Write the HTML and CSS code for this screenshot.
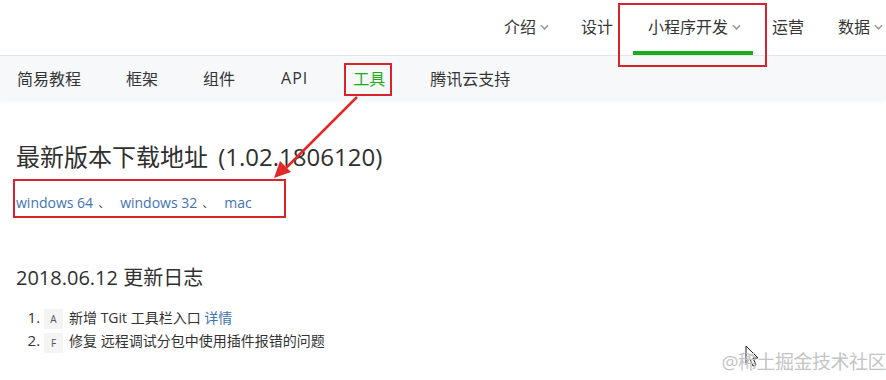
FILE: index.html
```html
<!DOCTYPE html>
<html lang="zh-CN">
<head>
<meta charset="utf-8">
<title>小程序开发 - 工具</title>
<link rel="stylesheet" href="styles.css">
</head>
<body>
<header class="topnav">
  <nav class="topnav-list">
    <a class="topnav-item">介绍<svg class="chev" viewBox="0 0 10 6"><polyline points="1,1 5,5 9,1"/></svg></a>
    <a class="topnav-item">设计</a>
    <a class="topnav-item active">小程序开发<svg class="chev" viewBox="0 0 10 6"><polyline points="1,1 5,5 9,1"/></svg><span class="underline"></span></a>
    <a class="topnav-item wide">运营</a>
    <a class="topnav-item">数据<svg class="chev" viewBox="0 0 10 6"><polyline points="1,1 5,5 9,1"/></svg></a>
  </nav>
</header>
<div class="subnav">
  <a class="subnav-item">简易教程</a>
  <a class="subnav-item">框架</a>
  <a class="subnav-item">组件</a>
  <a class="subnav-item latin">API</a>
  <a class="subnav-item current">工具</a>
  <a class="subnav-item">腾讯云支持</a>
</div>
<main class="content">
  <h1 class="title">最新版本下载地址 (1.02.1806120)</h1>
  <p class="downloads"><a class="link">windows 64</a><span class="sep">、</span><a class="link">windows 32</a><span class="sep">、</span><a class="link">mac</a></p>
  <h2 class="subtitle">2018.06.12 更新日志</h2>
  <ol class="log">
    <li><span class="badge">A</span>新增 TGit 工具栏入口 <a class="link">详情</a></li>
    <li><span class="badge">F</span>修复 远程调试分包中使用插件报错的问题</li>
  </ol>
</main>
<svg class="annotations" viewBox="0 0 886 380" width="886" height="380">
  <rect x="619" y="4" width="147" height="62" fill="none" stroke="#d9232c" stroke-width="2"/>
  <rect x="345" y="64" width="46" height="31" fill="none" stroke="#d9232c" stroke-width="2"/>
  <rect x="14" y="180" width="271" height="37" fill="none" stroke="#d9232c" stroke-width="2"/>
  <line x1="357" y1="97" x2="284" y2="170" stroke="#e02a2a" stroke-width="2.5"/>
  <polygon points="274,178 280,161 291,172" fill="#e02a2a"/>
  <path class="cursor" d="M746,346 L746,363 L750,359 L753,366 L756,365 L753,358 L758,358 Z" fill="#fff" stroke="#222" stroke-width="1"/>
</svg>
<div class="watermark">@稀土掘金技术社区</div>
</body>
</html>
```
FILE: styles.css
```css
* { box-sizing: border-box; }
html, body { margin: 0; padding: 0; }
body {
  width: 886px;
  height: 380px;
  overflow: hidden;
  position: relative;
  background: #fff;
  color: #333;
  font-family: "Open Sans", "Noto Sans CJK SC", sans-serif;
}
a { text-decoration: none; color: inherit; }

.topnav {
  height: 56px;
  border-bottom: 1px solid #e6e6e6;
  display: flex;
  justify-content: flex-end;
}
.topnav-list { display: flex; height: 55px; padding-bottom: 3px; }
.topnav-item {
  position: relative;
  display: flex;
  align-items: center;
  padding: 0 16px;
  font-size: 16px;
  color: #353535;
}
.topnav-item:first-child { padding-left: 0; }
.topnav-item:last-child { padding-right: 3px; }
.topnav-item.active { padding: 0 15px 0 19px; }
.topnav-item.wide { padding: 0 18px 0 16px; }
.chev {
  width: 9px;
  height: 6px;
  margin-left: 4px;
  margin-top: 1px;
  fill: none;
  stroke: #999;
  stroke-width: 1.7;
}
.underline {
  position: absolute;
  left: 4px;
  right: 3px;
  bottom: -3px;
  height: 4px;
  background: #1aad19;
}

.subnav {
  height: 44px;
  background: #f7f8f9;
  display: flex;
  align-items: center;
  gap: 45px;
  padding: 0 0 0 17px;
  box-shadow: 0 2px 3px rgba(0,0,0,0.03);
}
.subnav-item { font-size: 16px; color: #353535; }
.subnav-item.latin { letter-spacing: 1px; margin-left: 1px; }
.subnav-item.current { color: #1aad19; }

.content { padding: 0 16px; }
.title {
  margin: 40px 0 0;
  font-size: 24px;
  font-weight: normal;
  line-height: 34px;
  color: #2f2f2f;
  word-spacing: 4px;
}
.downloads {
  margin: 18px 0 0;
  font-size: 14px;
  line-height: 22px;
}
.link { color: #3f73b3; }
.sep { color: #555; margin: 0 10px 0 5px; font-size: 12px; }
.subtitle {
  margin: 48px 0 0;
  font-size: 20px;
  font-weight: normal;
  line-height: 30px;
  color: #2f2f2f;
}
.log {
  margin: 13px 0 0;
  padding-left: 28px;
  font-size: 14px;
  line-height: 22px;
  list-style-position: outside;
}
.log li::marker { font-size: 15px; }
.badge {
  display: inline-block;
  width: 19px;
  height: 20px;
  margin: 0 6px 0 0;
  text-align: center;
  background: #f4f4f4;
  color: #555;
  font-size: 10px;
  line-height: 20px;
  vertical-align: middle;
}

.annotations {
  position: absolute;
  left: 0;
  top: 0;
  pointer-events: none;
}
.watermark {
  position: absolute;
  right: 0;
  bottom: 5px;
  font-size: 19px;
  color: #c4c4c4;
  letter-spacing: -0.5px;
}
```
